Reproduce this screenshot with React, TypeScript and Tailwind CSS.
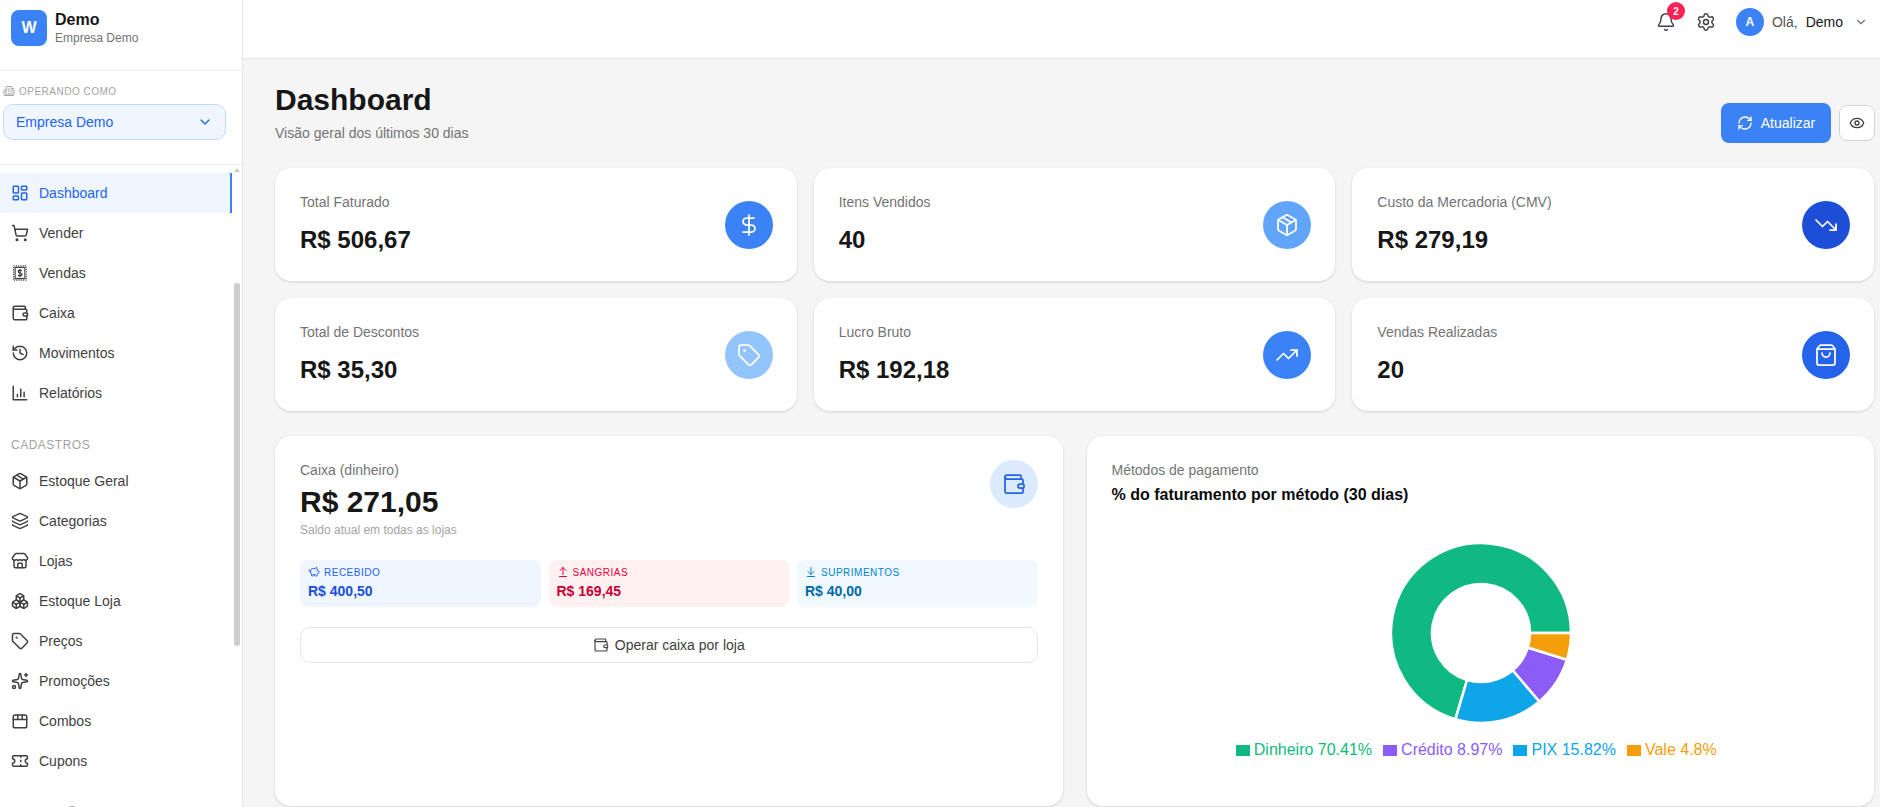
import {
  ArrowDownToLine,
  ArrowUpFromLine,
  Bell,
  Boxes,
  ChevronDown,
  Eye,
  History,
  Layers,
  LayoutDashboard,
  Package,
  DollarSign,
  PiggyBank,
  RefreshCw,
  Settings,
  ShoppingBag,
  ShoppingCart,
  Sparkles,
  Store,
  Tag,
  Ticket,
  TrendingDown,
  TrendingUp,
  Wallet,
  Building2,
} from 'lucide-react';
import type { ComponentType, ReactNode } from 'react';

type IconType = ComponentType<{ size?: number; strokeWidth?: number; className?: string }>;

const ReceiptIcon: IconType = ({ size = 18, strokeWidth = 2, className }) => (
  <svg width={size} height={size} viewBox="0 0 24 24" fill="none" stroke="currentColor" strokeWidth={strokeWidth} strokeLinecap="butt" strokeLinejoin="round" className={className}>
    <rect x="3.500" y="2.500" width="17" height="19" strokeDasharray="1.500 1.500" strokeWidth="1.500" />
    <rect x="5.500" y="4.500" width="13" height="15" strokeWidth="1.500" />
    <path d="M14.500 9.200c-.5-.7-1.400-1-2.500-1-1.400 0-2.400.7-2.400 1.900 0 2.600 5 1.300 5 3.800 0 1.200-1.100 1.900-2.600 1.900-1.100 0-2-.4-2.600-1.100M12 6.500v11" strokeWidth="1.700" />
  </svg>
);

const ReportIcon: IconType = ({ size = 18, strokeWidth = 2, className }) => (
  <svg width={size} height={size} viewBox="0 0 24 24" fill="none" stroke="currentColor" strokeWidth={strokeWidth} strokeLinecap="round" strokeLinejoin="round" className={className}>
    <path d="M3 3v18h18" />
    <path d="M8.500 17v-3M13 17V7M17.500 17v-6" />
  </svg>
);

const ComboIcon: IconType = ({ size = 18, strokeWidth = 2, className }) => (
  <svg width={size} height={size} viewBox="0 0 24 24" fill="none" stroke="currentColor" strokeWidth={strokeWidth} strokeLinecap="round" strokeLinejoin="round" className={className}>
    <rect x="3" y="4" width="18" height="17" rx="2.500" />
    <path d="M3 10h18M9 4v6M15 4v6" />
  </svg>
);

const mainNav: { label: string; icon: IconType; active?: boolean }[] = [
  { label: 'Dashboard', icon: LayoutDashboard, active: true },
  { label: 'Vender', icon: ShoppingCart },
  { label: 'Vendas', icon: ReceiptIcon },
  { label: 'Caixa', icon: Wallet },
  { label: 'Movimentos', icon: History },
  { label: 'Relatórios', icon: ReportIcon },
];

const registerNav: { label: string; icon: IconType }[] = [
  { label: 'Estoque Geral', icon: Package },
  { label: 'Categorias', icon: Layers },
  { label: 'Lojas', icon: Store },
  { label: 'Estoque Loja', icon: Boxes },
  { label: 'Preços', icon: Tag },
  { label: 'Promoções', icon: Sparkles },
  { label: 'Combos', icon: ComboIcon },
  { label: 'Cupons', icon: Ticket },
];

const kpis: { label: string; value: string; icon: IconType; circle: string }[] = [
  { label: 'Total Faturado', value: 'R$ 506,67', icon: DollarSign, circle: 'bg-[#3b82f6]' },
  { label: 'Itens Vendidos', value: '40', icon: Package, circle: 'bg-[#60a5fa]' },
  { label: 'Custo da Mercadoria (CMV)', value: 'R$ 279,19', icon: TrendingDown, circle: 'bg-[#1d4ed8]' },
  { label: 'Total de Descontos', value: 'R$ 35,30', icon: Tag, circle: 'bg-[#93c5fd]' },
  { label: 'Lucro Bruto', value: 'R$ 192,18', icon: TrendingUp, circle: 'bg-[#3b82f6]' },
  { label: 'Vendas Realizadas', value: '20', icon: ShoppingBag, circle: 'bg-[#2563eb]' },
];

const legend = [
  { label: 'Dinheiro 70.41%', share: 70.41, fill: '#10b981', box: 'bg-[#10b981]', text: 'text-[#10b981]' },
  { label: 'PIX 15.82%', share: 15.82, fill: '#0ea5e9', box: 'bg-[#0ea5e9]', text: 'text-[#0ea5e9]' },
  { label: 'Crédito 8.97%', share: 8.97, fill: '#8b5cf6', box: 'bg-[#8b5cf6]', text: 'text-[#8b5cf6]' },
  { label: 'Vale 4.8%', share: 4.8, fill: '#f59e0b', box: 'bg-[#f59e0b]', text: 'text-[#f59e0b]' },
];

const legendOrder = ['Dinheiro 70.41%', 'Crédito 8.97%', 'PIX 15.82%', 'Vale 4.8%'];

// Slices run counter-clockwise starting from 3 o'clock, same as the chart in the app.
const donutSlices = () => {
  const point = (radius: number, angle: number) =>
    `${(100 + radius * Math.cos(angle)).toFixed(2)} ${(100 - radius * Math.sin(angle)).toFixed(2)}`;
  let start = 0;
  return legend.map((item) => {
    const end = start + (item.share / 100) * Math.PI * 2;
    const large = end - start > Math.PI ? 1 : 0;
    const d = `M${point(90, start)} A90 90 0 ${large} 0 ${point(90, end)} L${point(49, end)} A49 49 0 ${large} 1 ${point(49, start)} Z`;
    start = end;
    return { d, fill: item.fill, key: item.label };
  });
};

const NavItem = ({ label, icon: Icon, active }: { label: string; icon: IconType; active?: boolean }) => (
  <div
    className={`flex h-10 items-center gap-[10px] pl-[11px] text-[14px] ${
      active ? 'border-r-2 border-[#3b82f6] bg-[#eff6ff] text-[#2563eb]' : 'text-[#404040]'
    }`}
  >
    <Icon size={18} strokeWidth={2} className="shrink-0" />
    <span>{label}</span>
  </div>
);

const Sidebar = () => (
  <aside className="relative flex h-full w-[243px] shrink-0 flex-col overflow-hidden border-r border-[#e5e5e5] bg-white">
    <div className="flex h-[71px] shrink-0 items-start gap-2 border-b border-[#f0f0f0] pl-[11px] pt-[10px]">
      <div className="flex h-9 w-9 items-center justify-center rounded-lg bg-[#3b82f6] text-[16px] font-bold text-white">W</div>
      <div>
        <div className="text-[16px] font-bold leading-[20px] text-[#171717]">Demo</div>
        <div className="text-[12px] leading-[16px] text-[#737373]">Empresa Demo</div>
      </div>
    </div>

    <div className="h-[94px] shrink-0 border-b border-[#f0f0f0] pl-[3px] pt-[13px]">
      <div className="flex h-[14px] items-center gap-[1px] text-[10px] tracking-[0.5px] text-[#a3a3a3]">
        <Building2 size={12} strokeWidth={2} className="mr-[3px]" />
        <span>OPERANDO COMO</span>
      </div>
      <div className="mt-[6px] flex h-9 w-[223px] items-center justify-between rounded-[10px] border border-[#bfdbfe] bg-[#eff6ff] pl-3 pr-[12px] text-[14px] text-[#2563eb]">
        <span>Empresa Demo</span>
        <ChevronDown size={16} />
      </div>
    </div>

    <nav className="min-h-0 flex-1 pt-2 pr-[10px]">
      {mainNav.map((item) => (
        <NavItem key={item.label} {...item} />
      ))}
      <div className="pb-[8px] pl-[11px] pt-[24px] text-[12px] leading-[16px] tracking-[0.5px] text-[#a3a3a3]">CADASTROS</div>
      {registerNav.map((item) => (
        <NavItem key={item.label} {...item} />
      ))}
      <div className="pl-[11px] pt-[24px] text-[12px] leading-[16px] tracking-[0.5px] text-[#a3a3a3]">PROMOÇÃO</div>
    </nav>

    {/* scrollbar of the menu */}
    <div className="absolute left-[234px] top-[168px] h-0 w-0 border-x-[3px] border-b-[4px] border-x-transparent border-b-[#cdcdcd]" />
    <div className="absolute left-[234px] top-[283px] h-[363px] w-[6px] rounded-[3px] bg-[#cdcdcd]" />
  </aside>
);

const KpiCard = ({ label, value, icon: Icon, circle }: (typeof kpis)[number]) => (
  <div className="flex h-[113px] items-center justify-between rounded-2xl bg-white pl-[25px] pr-[24px] shadow-[0_1px_3px_rgba(0,0,0,0.14)]">
    <div className="pb-[2px]">
      <div className="text-[14px] leading-[20px] text-[#737373]">{label}</div>
      <div className="mt-[12px] text-[24px] font-bold leading-[32px] text-[#171717]">{value}</div>
    </div>
    <div className={`flex h-12 w-12 items-center justify-center rounded-full text-white ${circle}`}>
      <Icon size={24} strokeWidth={1.75} />
    </div>
  </div>
);

const CashChip = ({ icon, label, value, box, labelColor, valueColor }: { icon: ReactNode; label: string; value: string; box: string; labelColor: string; valueColor: string }) => (
  <div className={`h-[47px] rounded-lg px-2 pt-[5px] ${box}`}>
    <div className={`flex h-[14px] items-center gap-[4px] text-[10px] tracking-[0.5px] ${labelColor}`}>
      {icon}
      <span>{label}</span>
    </div>
    <div className={`mt-[2px] text-[14px] font-bold leading-[20px] ${valueColor}`}>{value}</div>
  </div>
);

const CashCard = () => (
  <div className="h-[370px] rounded-2xl bg-white px-[25px] pt-[24px] shadow-[0_1px_3px_rgba(0,0,0,0.14)]">
    <div className="flex items-start justify-between">
      <div>
        <div className="text-[14px] leading-[20px] text-[#737373]">Caixa (dinheiro)</div>
        <div className="mt-[4px] text-[30px] font-bold leading-[36px] text-[#171717]">R$ 271,05</div>
        <div className="mt-[2px] text-[12px] leading-[16px] text-[#a3a3a3]">Saldo atual em todas as lojas</div>
      </div>
      <div className="flex h-12 w-12 items-center justify-center rounded-full bg-[#dbeafe] text-[#2563eb]">
        <Wallet size={24} strokeWidth={1.75} />
      </div>
    </div>
    <div className="mt-[22px] grid grid-cols-3 gap-2">
      <CashChip icon={<PiggyBank size={12} />} label="RECEBIDO" value="R$ 400,50" box="bg-[#eff6ff]" labelColor="text-[#2563eb]" valueColor="text-[#1d4ed8]" />
      <CashChip icon={<ArrowUpFromLine size={12} />} label="SANGRIAS" value="R$ 169,45" box="bg-[#fff1f2]" labelColor="text-[#ec003f]" valueColor="text-[#c70036]" />
      <CashChip icon={<ArrowDownToLine size={12} />} label="SUPRIMENTOS" value="R$ 40,00" box="bg-[#f0f9ff]" labelColor="text-[#0084d1]" valueColor="text-[#0069a8]" />
    </div>
    <div className="mt-[20px] flex h-9 items-center justify-center gap-[6px] rounded-[10px] border border-[#e5e5e5] text-[14px] text-[#404040]">
      <Wallet size={16} strokeWidth={1.75} />
      <span>Operar caixa por loja</span>
    </div>
  </div>
);

const PaymentCard = () => (
  <div className="h-[370px] rounded-2xl bg-white px-[25px] pt-[24px] shadow-[0_1px_3px_rgba(0,0,0,0.14)]">
    <div className="text-[14px] leading-[20px] text-[#737373]">Métodos de pagamento</div>
    <div className="mt-[5px] text-[16px] font-semibold leading-[20px] text-[#0a0a0a]">% do faturamento por método (30 dias)</div>
    <div className="mt-[38px] flex justify-center pl-[2px]">
      <svg width="180" height="180" viewBox="10 10 180 180">
        {donutSlices().map((slice) => (
          <path key={slice.key} d={slice.d} fill={slice.fill} stroke="#fff" strokeWidth="2.5" />
        ))}
      </svg>
    </div>
    <div className="mt-[15px] flex justify-center gap-[11px] pr-[8px] text-[16px] leading-[24px]">
      {legendOrder.map((label) => {
        const item = legend.find((entry) => entry.label === label)!;
        return (
          <span key={label} className={`flex items-center gap-[4px] ${item.text}`}>
            <span className={`h-[11px] w-[14px] ${item.box}`} />
            {label}
          </span>
        );
      })}
    </div>
  </div>
);

export default function App() {
  return (
    <div className="flex h-[807px] w-[1880px] overflow-hidden bg-[#f5f5f5] font-['Liberation_Sans',Arial,sans-serif]">
      <Sidebar />
      <div className="flex min-w-0 flex-1 flex-col overflow-hidden">
        <header className="flex h-[59px] shrink-0 items-center justify-end border-b border-[#e5e5e5] bg-white pb-[15px] pr-[12px] pt-[1px] text-[14px]">
          <div className="relative mr-[20px] text-[#404040]">
            <Bell size={20} strokeWidth={1.75} />
            <span className="absolute -right-[9px] -top-[10px] flex h-[18px] w-[18px] items-center justify-center rounded-full bg-[#ff2056] text-[10px] font-bold text-white">2</span>
          </div>
          <Settings size={20} strokeWidth={1.75} className="mr-[20px] text-[#404040]" />
          <div className="flex h-7 w-7 items-center justify-center rounded-full bg-[#3b82f6] text-[12px] font-bold text-white">A</div>
          <span className="ml-2 text-[#525252]">Olá,</span>
          <span className="ml-[8px] text-[#171717]">Demo</span>
          <ChevronDown size={14} className="ml-[11px] text-[#737373]" />
        </header>

        <main className="min-h-0 flex-1 overflow-hidden pl-[32px] pr-[6px] pt-[21px]">
          <div className="flex items-end justify-between">
            <div>
              <h1 className="text-[30px] font-bold leading-[40px] text-[#171717]">Dashboard</h1>
              <p className="mt-[3px] text-[14px] leading-[20px] text-[#737373]">Visão geral dos últimos 30 dias</p>
            </div>
            <div className="-mr-px flex items-center gap-2">
              <div className="flex h-10 w-[110px] items-center justify-center gap-2 rounded-lg bg-[#3b82f6] text-[14px] text-white">
                <RefreshCw size={16} strokeWidth={2} />
                <span>Atualizar</span>
              </div>
              <div className="flex h-9 w-9 items-center justify-center rounded-lg border border-[#d4d4d4] bg-white text-[#404040]">
                <Eye size={16} />
              </div>
            </div>
          </div>

          <div className="mt-[25px] grid grid-cols-3 gap-x-[17px] gap-y-[17px]">
            {kpis.map((kpi) => (
              <KpiCard key={kpi.label} {...kpi} />
            ))}
          </div>

          <div className="mt-[25px] grid grid-cols-2 gap-6">
            <CashCard />
            <PaymentCard />
          </div>
        </main>
      </div>
    </div>
  );
}
